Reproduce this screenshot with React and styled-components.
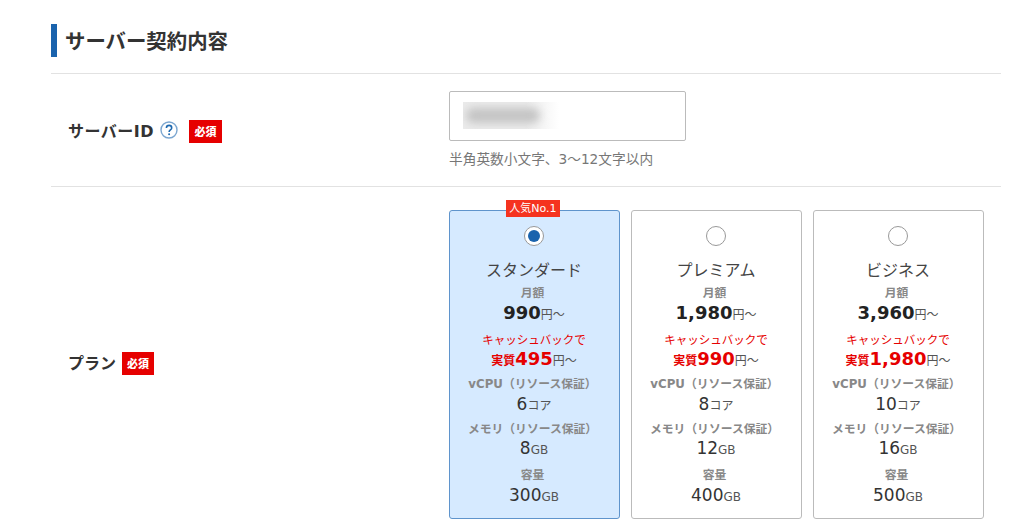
import React from 'react';
import styled, { createGlobalStyle } from 'styled-components';

const plans = [
    { name: 'スタンダード', price: '990', back: '495', cpu: '6', memory: '8', disk: '300', selected: true },
    { name: 'プレミアム', price: '1,980', back: '990', cpu: '8', memory: '12', disk: '400' },
    { name: 'ビジネス', price: '3,960', back: '1,980', cpu: '10', memory: '16', disk: '500' },
];

const HelpIcon = () => (
    <svg width="18" height="18" viewBox="0 0 18 18">
        <circle cx="9" cy="9" r="8" fill="#fff" stroke="#7ba6d0" strokeWidth="1.4" />
        <path d="M6.4 7c0-1.6 1.1-2.6 2.7-2.6S11.700 5.400 11.700 6.900c0 2-2.600 2.100-2.600 4.100" fill="none" stroke="#1e69b0" strokeWidth="1.6" />
        <circle cx="9.100" cy="13.200" r="1" fill="#1e69b0" />
    </svg>
);

const PlanCard = ({ plan }) => (
    <Card selected={plan.selected}>
        {plan.selected && <Badge>人気No.1</Badge>}
        <Radio selected={plan.selected} />
        <PlanName>{plan.name}</PlanName>
        <SpecLabel gap={4}>月額</SpecLabel>
        <Price>{plan.price}<Unit>円～</Unit></Price>
        <Cashback>キャッシュバックで</Cashback>
        <Effective>実質<strong>{plan.back}</strong><Unit>円～</Unit></Effective>
        <SpecLabel gap={6}>vCPU（リソース保証）</SpecLabel>
        <SpecValue>{plan.cpu}<Unit>コア</Unit></SpecValue>
        <SpecLabel gap={5}>メモリ（リソース保証）</SpecLabel>
        <SpecValue gap={-1}>{plan.memory}<Unit>GB</Unit></SpecValue>
        <SpecLabel gap={7}>容量</SpecLabel>
        <SpecValue>{plan.disk}<Unit>GB</Unit></SpecValue>
    </Card>
);

const App = () => (
    <Page>
        <GlobalStyle />
        <Heading>サーバー契約内容</Heading>
        <Row height={112}>
            <Label>サーバーID<HelpIcon /><Required wide>必須</Required></Label>
            <Field>
                <Input><Blurred /></Input>
                <Hint>半角英数小文字、3～12文字以内</Hint>
            </Field>
        </Row>
        <Row>
            <Label plan>プラン<Required>必須</Required></Label>
            <Cards>
                {plans.map(plan => <PlanCard key={plan.name} plan={plan} />)}
            </Cards>
        </Row>
    </Page>
);

export default App;

const GlobalStyle = createGlobalStyle`
    html, body {
        margin: 0;
        background: #fff;
        overflow: hidden;
    }
`;

const Page = styled.div`
    width: 950px;
    height: 528px;
    margin-left: 51px;
    font-family: "DejaVu Sans", "Noto Sans CJK JP", sans-serif;
    color: #333;
    overflow: hidden;
`;

const Heading = styled.h2`
    height: 33px;
    margin: 24px 0 16px;
    padding-left: 8px;
    border-left: 6px solid #1a63ad;
    font-family: "Noto Sans CJK JP", sans-serif;
    font-size: 20.4px;
    line-height: 33px;
    font-weight: 700;
    color: #333;
`;

const Row = styled.div`
    display: flex;
    align-items: center;
    height: ${props => (props.height ? `${props.height}px` : 'auto')};
    border-top: 1px solid #e2e2e2;
    padding-top: ${props => (props.height ? 0 : '23px')};
`;

const Label = styled.div`
    display: flex;
    align-items: center;
    width: 398px;
    flex-shrink: 0;
    box-sizing: border-box;
    padding-left: 17px;
    margin-top: ${props => (props.plan ? '-5px' : 0)};
    gap: 6px;
    letter-spacing: ${props => (props.plan ? 0 : '0.5px')};
    font-size: 16px;
    font-weight: 700;
    color: #333;
`;

const Required = styled.span`
    margin-left: ${props => (props.wide ? '5px' : 0)};
    margin-top: 3px;
    width: ${props => (props.wide ? '33px' : '32px')};
    height: 23px;
    background: #e60000;
    color: #fff;
    font-family: "Noto Sans CJK JP", sans-serif;
    font-size: 11px;
    font-weight: 900;
    letter-spacing: 0;
    line-height: 23px;
    text-align: center;
`;

const Field = styled.div`
    display: flex;
    flex-direction: column;
    margin-top: -2px;
`;

const Input = styled.div`
    display: flex;
    align-items: center;
    width: 237px;
    height: 50px;
    box-sizing: border-box;
    padding-left: 13px;
    border: 1px solid #bbb;
    border-radius: 2px;
    background: #fff;
`;

const Blurred = styled.div`
    width: 96px;
    height: 27px;
    overflow: hidden;
    background: linear-gradient(90deg, #ebebeb 65%, #fff);
    &::after {
        content: "";
        display: block;
        width: 74px;
        height: 15px;
        margin: 6px 0 0 3px;
        border-radius: 8px;
        background: #c4c4c4;
        filter: blur(4px);
    }
`;

const Hint = styled.p`
    margin: 9px 0 0;
    font-size: 13.7px;
    line-height: 18px;
    color: #777;
`;

const Cards = styled.div`
    display: flex;
    gap: 11px;
`;

const Card = styled.div`
    position: relative;
    display: flex;
    flex-direction: column;
    align-items: center;
    width: 171px;
    height: 309px;
    box-sizing: border-box;
    padding: 15px 1px 0 0;
    border: 1px solid ${props => (props.selected ? '#5f94cc' : '#bbb')};
    border-radius: 3px;
    background: ${props => (props.selected ? '#d6eaff' : '#fff')};
`;

const Badge = styled.span`
    position: absolute;
    top: -11px;
    left: 56px;
    width: 54px;
    height: 17px;
    background: #f5331f;
    color: #fff;
    font-size: 11px;
    line-height: 17px;
    text-align: center;
    white-space: nowrap;
`;

const Radio = styled.span`
    position: relative;
    flex-shrink: 0;
    width: 20px;
    height: 20px;
    box-sizing: border-box;
    border: 1.5px solid #999;
    border-radius: 50%;
    background: #fff;
    &::after {
        content: "";
        display: ${props => (props.selected ? 'block' : 'none')};
        position: absolute;
        top: 2.5px;
        left: 2.5px;
        width: 12px;
        height: 12px;
        border-radius: 50%;
        background: #1a63ad;
    }
`;

const PlanName = styled.div`
    margin-top: 11px;
    height: 24px;
    font-family: "Noto Sans CJK JP", sans-serif;
    font-size: 16px;
    line-height: 24px;
    color: #444;
`;

const SpecLabel = styled.div`
    margin-top: ${props => props.gap}px;
    padding-right: 3px;
    height: 16px;
    font-size: 11.8px;
    font-weight: 700;
    line-height: 16px;
    color: #888;
    white-space: nowrap;
`;

const Price = styled.div`
    height: 24px;
    font-size: 18px;
    font-weight: 700;
    line-height: 24px;
    color: #222;
`;

const Unit = styled.span`
    font-size: 12px;
    font-weight: 400;
    color: #555;
`;

const Cashback = styled.div`
    margin-top: 5px;
    height: 18px;
    font-family: "Noto Sans CJK JP", sans-serif;
    font-size: 11.5px;
    line-height: 18px;
    color: #e60000;
`;

const Effective = styled.div`
    height: 22px;
    font-size: 12px;
    font-weight: 700;
    line-height: 22px;
    color: #e60000;
    strong {
        font-size: 18px;
    }
    span {
        color: #555;
    }
`;

const SpecValue = styled.div`
    margin-top: ${props => props.gap || 0}px;
    height: 24px;
    font-size: 17px;
    line-height: 24px;
    color: #333;
`;
